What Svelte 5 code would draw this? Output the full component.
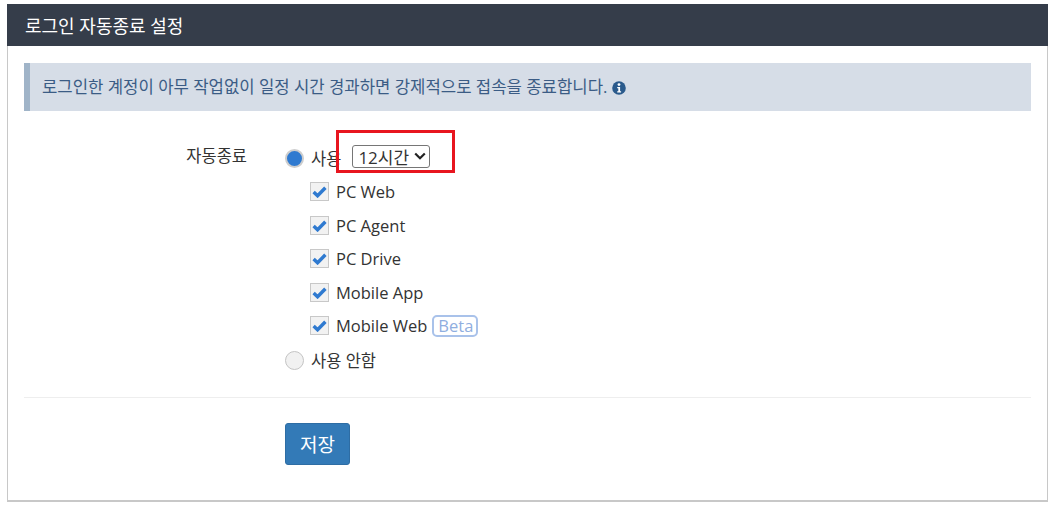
<script>
  const channels = [
    { name: "PC Web" },
    { name: "PC Agent" },
    { name: "PC Drive" },
    { name: "Mobile App" },
    { name: "Mobile Web", beta: true }
  ];
</script>

<div class="panel">
  <div class="panel-head">로그인 자동종료 설정</div>
  <div class="panel-body">
    <div class="alert">
      로그인한 계정이 아무 작업없이 일정 시간 경과하면 강제적으로 접속을 종료합니다.
      <svg class="info" viewBox="0 0 14 14" width="14" height="14">
        <circle cx="7" cy="7" r="6.8" fill="#2a5a8c" />
        <circle cx="7" cy="3.6" r="1.4" fill="#fff" />
        <path d="M5.2 6h2.9v4.2h1v1.2H5.2v-1.2h1.1V7.2H5.2z" fill="#fff" />
      </svg>
    </div>

    <div class="form-row">
      <div class="lab">자동종료</div>
      <div class="controls">
        <div class="radio-row">
          <span class="radio on"></span>
          <span class="radio-text">사용</span>
          <span class="select">12시간
            <svg viewBox="0 0 12 8" width="12" height="8"><path d="M1.2 1.5 6 6.2l4.8-4.7" fill="none" stroke="#222" stroke-width="2.2" /></svg>
          </span>
          <span class="highlight"></span>
        </div>
        {#each channels as c}
          <div class="check-row">
            <span class="check">
              <svg viewBox="0 0 14 12" width="15" height="13"><path d="M1.5 6.5 5.2 10 12.5 2.5" fill="none" stroke="#2f7ad0" stroke-width="3.2" /></svg>
            </span>
            <span class="check-text">{c.name}</span>
            {#if c.beta}<span class="beta">Beta</span>{/if}
          </div>
        {/each}
        <div class="radio-row off">
          <span class="radio"></span>
          <span class="radio-text">사용 안함</span>
        </div>
      </div>
    </div>

    <div class="actions">
      <button class="btn" type="button">저장</button>
    </div>
  </div>
</div>

<style>
  :global(body) {
    background: #fff;
    font-family: "Open Sans", "Noto Sans CJK KR", sans-serif;
  }
  .panel {
    margin: 4px 14px 0 7px;
    height: 498px;
    box-sizing: border-box;
    border-right: 1px solid #c8c8c8;
    border-left: 1px solid #c8c8c8;
    border-bottom: 2px solid #c8c8c8;
  }
  .panel-head {
    margin: 0 -1px;
    height: 42px;
    padding-left: 18px;
    background: #353d4a;
    color: #fff;
    font-size: 18px;
    line-height: 44px;
  }
  .panel-body {
    padding: 17px 16px 0;
  }
  .alert {
    height: 48px;
    box-sizing: border-box;
    padding-left: 12px;
    background: #d6dde7;
    border-left: 6px solid #a0b4c8;
    color: #3b5c85;
    font-size: 16.7px;
    line-height: 47px;
  }
  .info {
    vertical-align: -2px;
  }
  .form-row {
    display: flex;
    margin-top: 32px;
    padding-bottom: 22px;
    border-bottom: 1px solid #eee;
    color: #333;
  }
  .lab {
    width: 223px;
    text-align: right;
    font-size: 16.5px;
    line-height: 26px;
  }
  .controls {
    margin-left: 38px;
  }
  .radio-row {
    position: relative;
    display: flex;
    align-items: center;
    height: 30px;
    margin-bottom: 2px;
    font-size: 16.5px;
  }
  .radio-row.off {
    margin: 2.5px 0 0;
  }
  .radio {
    width: 19px;
    height: 19px;
    box-sizing: border-box;
    margin-right: 7px;
    border: 1px solid #c4c4c4;
    border-radius: 50%;
    background: #f1f1f1;
  }
  .radio.on {
    border: 2px solid #cdcdcd;
    background: #2f7ad0;
  }
  .select {
    display: flex;
    align-items: center;
    gap: 5px;
    height: 23px;
    box-sizing: border-box;
    margin: 0 0 4px 11px;
    padding: 0 3px 0 5px;
    border: 1px solid #767676;
    border-radius: 3px;
    color: #333;
    font-size: 17px;
  }
  .highlight {
    position: absolute;
    left: 51px;
    top: -13px;
    width: 119px;
    height: 43px;
    box-sizing: border-box;
    border: 3px solid #e8151f;
  }
  .check-row {
    display: flex;
    align-items: center;
    height: 33.5px;
    margin-left: 25px;
    font-size: 16.5px;
    color: #333;
  }
  .check {
    display: flex;
    align-items: center;
    justify-content: center;
    width: 19px;
    height: 19px;
    box-sizing: border-box;
    margin-right: 7px;
    border: 1px solid #c8c8c8;
    background: #f2f2f2;
  }
  .beta {
    margin-left: 5px;
    padding: 0 3px 0 4px;
    border: 2px solid #a9c2ea;
    border-radius: 5px;
    color: #8faee0;
    font-size: 16.5px;
    line-height: 18px;
  }
  .actions {
    padding: 25px 0 0 261px;
  }
  .btn {
    width: 65px;
    height: 42px;
    padding: 0;
    border: 1px solid #2e6da4;
    border-radius: 3px;
    background: #337ab7;
    color: #fff;
    font-family: inherit;
    font-size: 19px;
  }
</style>
